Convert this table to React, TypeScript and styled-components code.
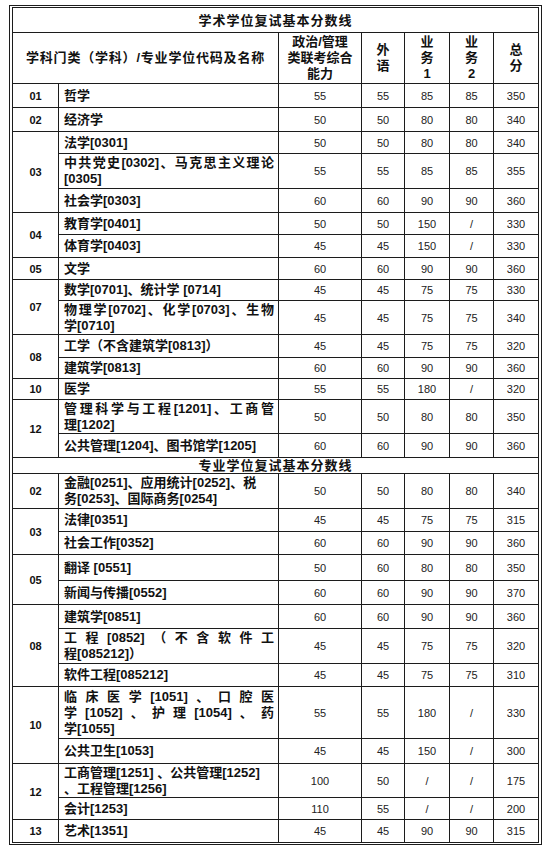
import React from "react";
import styled, { createGlobalStyle } from "styled-components";

const GlobalStyle = createGlobalStyle`
  body {
    margin: 0;
    background: #fff;
  }
`;

const Frame = styled.div`
  margin: 5px 0 0 9px;
  width: fit-content;
  border: 1px solid #1c1c1c;
  padding: 1px 2px;
`;

const Table = styled.table`
  border-collapse: collapse;
  table-layout: fixed;
  width: 527px;
  color: #111;
  font-family: "Liberation Sans", "Noto Sans CJK SC", sans-serif;
`;

const Col = styled.col<{ $w: number }>`
  width: ${(p) => p.$w}px;
`;

const Tr = styled.tr<{ $h: number }>`
  height: ${(p) => p.$h}px;
`;

const TitleCell = styled.th`
  border: 1px solid #1c1c1c;
  padding: 0;
  font-size: 13px;
  font-weight: 700;
  letter-spacing: 1px;
  line-height: 15px;
  text-align: center;
  vertical-align: middle;
`;

const HeadCell = styled.th<{ $spacing?: number }>`
  border: 1px solid #1c1c1c;
  padding: 0;
  font-size: 13px;
  font-weight: 700;
  line-height: 16px;
  letter-spacing: ${(p) => p.$spacing ?? 0}px;
  text-align: center;
  vertical-align: middle;
`;

const CodeCell = styled.td`
  border: 1px solid #1c1c1c;
  padding: 0;
  font-size: 11px;
  font-weight: 700;
  text-align: center;
  vertical-align: middle;
`;

const NameCell = styled.td`
  border: 1px solid #1c1c1c;
  padding: 0 4px 0 5px;
  font-size: 13px;
  font-weight: 700;
  line-height: 16px;
  text-align: left;
  vertical-align: middle;
`;

const Line = styled.span<{ $justify?: boolean }>`
  display: block;
  white-space: ${(p) => (p.$justify ? "normal" : "pre")};
  text-align: ${(p) => (p.$justify ? "justify" : "left")};
  text-align-last: ${(p) => (p.$justify ? "justify" : "auto")};
`;

const ScoreCell = styled.td`
  border: 1px solid #1c1c1c;
  padding: 0;
  font-size: 11px;
  color: #222;
  text-align: center;
  vertical-align: middle;
`;

type Row = { name: string; s: string[]; h: number; j?: boolean };
type Group = { code: string; rows: Row[] };

const academic: Group[] = [
  { code: "01", rows: [{ name: "哲学", s: ["55", "55", "85", "85", "350"], h: 24 }] },
  { code: "02", rows: [{ name: "经济学", s: ["50", "50", "80", "80", "340"], h: 24 }] },
  {
    code: "03",
    rows: [
      { name: "法学[0301]", s: ["50", "50", "80", "80", "340"], h: 22 },
      { name: "中共党史[0302]、马克思主义理论|[0305]", s: ["55", "55", "85", "85", "355"], h: 35, j: true },
      { name: "社会学[0303]", s: ["60", "60", "90", "90", "360"], h: 24 },
    ],
  },
  {
    code: "04",
    rows: [
      { name: "教育学[0401]", s: ["50", "50", "150", "/", "330"], h: 22 },
      { name: "体育学[0403]", s: ["45", "45", "150", "/", "330"], h: 23 },
    ],
  },
  { code: "05", rows: [{ name: "文学", s: ["60", "60", "90", "90", "360"], h: 22 }] },
  {
    code: "07",
    rows: [
      { name: "数学[0701]、统计学 [0714]", s: ["45", "45", "75", "75", "330"], h: 21 },
      { name: "物理学[0702]、化学[0703]、生物|学[0710]", s: ["45", "45", "75", "75", "340"], h: 34, j: true },
    ],
  },
  {
    code: "08",
    rows: [
      { name: "工学（不含建筑学[0813]）", s: ["45", "45", "75", "75", "320"], h: 23 },
      { name: "建筑学[0813]", s: ["60", "60", "90", "90", "360"], h: 21 },
    ],
  },
  { code: "10", rows: [{ name: "医学", s: ["55", "55", "180", "/", "320"], h: 21 }] },
  {
    code: "12",
    rows: [
      { name: "管理科学与工程[1201]、工商管|理[1202]", s: ["50", "50", "80", "80", "350"], h: 34, j: true },
      { name: "公共管理[1204]、图书馆学[1205]", s: ["60", "60", "90", "90", "360"], h: 24 },
    ],
  },
];

const professional: Group[] = [
  {
    code: "02",
    rows: [{ name: "金融[0251]、应用统计[0252]、税|务[0253]、国际商务[0254]", s: ["50", "50", "80", "80", "340"], h: 35 }],
  },
  {
    code: "03",
    rows: [
      { name: "法律[0351]", s: ["45", "45", "75", "75", "315"], h: 23 },
      { name: "社会工作[0352]", s: ["60", "60", "90", "90", "360"], h: 23 },
    ],
  },
  {
    code: "05",
    rows: [
      { name: "翻译 [0551]", s: ["50", "60", "80", "80", "350"], h: 26 },
      { name: "新闻与传播[0552]", s: ["60", "60", "90", "90", "370"], h: 24 },
    ],
  },
  {
    code: "08",
    rows: [
      { name: "建筑学[0851]", s: ["60", "60", "90", "90", "360"], h: 24 },
      { name: "工程[0852]（不含软件工|程[085212]）", s: ["45", "45", "75", "75", "320"], h: 35, j: true },
      { name: "软件工程[085212]", s: ["45", "45", "75", "75", "310"], h: 23 },
    ],
  },
  {
    code: "10",
    rows: [
      { name: "临床医学[1051]、口腔医|学[1052]、护理[1054]、药|学[1055]", s: ["55", "55", "180", "/", "330"], h: 52, j: true },
      { name: "公共卫生[1053]", s: ["45", "45", "150", "/", "300"], h: 25 },
    ],
  },
  {
    code: "12",
    rows: [
      { name: "工商管理[1251] 、公共管理[1252]|、工程管理[1256]", s: ["100", "50", "/", "/", "175"], h: 34 },
      { name: "会计[1253]", s: ["110", "55", "/", "/", "200"], h: 22 },
    ],
  },
  { code: "13", rows: [{ name: "艺术[1351]", s: ["45", "45", "90", "90", "315"], h: 23 }] },
];

function Name({ text, justify }: { text: string; justify?: boolean }) {
  const lines = text.split("|");
  return (
    <>
      {lines.map((l, i) => (
        <Line key={i} $justify={justify && i < lines.length - 1}>
          {l}
        </Line>
      ))}
    </>
  );
}

function GroupRows({ group }: { group: Group }) {
  return (
    <>
      {group.rows.map((r, i) => (
        <Tr key={i} $h={r.h}>
          {i === 0 && <CodeCell rowSpan={group.rows.length}>{group.code}</CodeCell>}
          <NameCell>
            <Name text={r.name} justify={r.j} />
          </NameCell>
          {r.s.map((v, k) => (
            <ScoreCell key={k}>{v}</ScoreCell>
          ))}
        </Tr>
      ))}
    </>
  );
}

export default function App() {
  return (
    <>
      <GlobalStyle />
      <Frame>
        <Table>
          <colgroup>
            {[46, 220, 83, 43, 45, 44, 45].map((w, i) => (
              <Col key={i} $w={w} />
            ))}
          </colgroup>
          <tbody>
            <Tr $h={25}>
              <TitleCell colSpan={7}>学术学位复试基本分数线</TitleCell>
            </Tr>
            <Tr $h={51}>
              <HeadCell colSpan={2} $spacing={0.8}>
                学科门类（学科）/专业学位代码及名称
              </HeadCell>
              <HeadCell>
                政治/管理
                <br />
                类联考综合
                <br />
                能力
              </HeadCell>
              <HeadCell>
                外<br />语
              </HeadCell>
              <HeadCell>
                业<br />务<br />1
              </HeadCell>
              <HeadCell>
                业<br />务<br />2
              </HeadCell>
              <HeadCell>
                总<br />分
              </HeadCell>
            </Tr>
            {academic.map((g) => (
              <GroupRows key={"a" + g.code} group={g} />
            ))}
            <Tr $h={16}>
              <TitleCell colSpan={7}>专业学位复试基本分数线</TitleCell>
            </Tr>
            {professional.map((g) => (
              <GroupRows key={"p" + g.code} group={g} />
            ))}
          </tbody>
        </Table>
      </Frame>
    </>
  );
}
